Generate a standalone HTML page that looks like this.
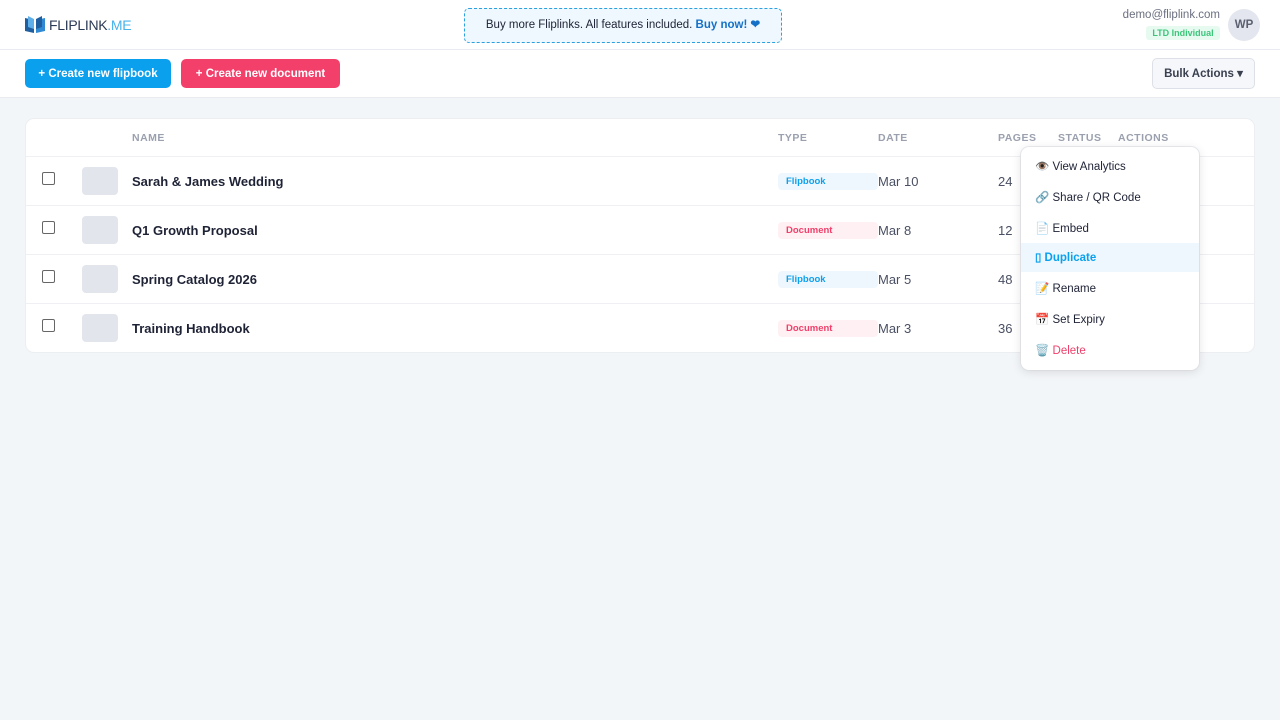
<!DOCTYPE html>
<html><head><meta charset="utf-8"><style>
*{box-sizing:border-box;margin:0;padding:0}
body{width:1280px;height:720px;background:#f3f6f9;font-family:"Liberation Sans",sans-serif;color:#1e2235;position:relative;overflow:hidden}
.top{position:absolute;left:0;top:0;width:1280px;height:50px;background:#fff;border-bottom:1px solid #e8ebef}
.bar{position:absolute;left:0;top:50px;width:1280px;height:48px;background:#fff;border-bottom:1px solid #e8ebef}
.btn{position:absolute;top:9px;height:29px;border-radius:5px;color:#fff;font-weight:bold;font-size:11.5px;line-height:30px;text-align:center}
.card{position:absolute;left:26px;top:119px;width:1228px;height:233px;background:#fff;border-radius:8px;box-shadow:0 0 0 1px #eceef2}
.th{position:absolute;top:13px;font-size:10.5px;font-weight:bold;color:#9aa0ae;letter-spacing:.5px}
.row{position:absolute;left:0;width:1228px;height:49px;border-top:1px solid #eef0f3}
.cb{position:absolute;left:16px;top:15px;width:13px;height:13px;border:1px solid #666;border-radius:2px;background:#fff}
.th2{position:absolute;left:56px;top:10px;width:36px;height:28px;background:#e2e5ec;border-radius:4px}
.nm{position:absolute;left:106px;top:17px;font-size:13px;font-weight:bold;color:#1e2235}
.tag{position:absolute;left:752px;top:16px;width:100px;height:17px;border-radius:4px;font-size:9.5px;font-weight:bold;line-height:17px;padding-left:8px}
.fb{background:#eef7fd;color:#0ea0ec}.dc{background:#fff0f3;color:#ef3f6a}
.dt{position:absolute;left:852px;top:17px;font-size:13px;color:#4a5063}
.pg{position:absolute;left:972px;top:17px;font-size:13px;color:#4a5063}
.menu{position:absolute;left:1021px;top:147px;width:178px;height:223px;background:#fff;border-radius:8px;box-shadow:0 2px 10px rgba(0,0,0,.12),0 0 0 1px #eceef2}
.mi{position:absolute;left:0;width:178px;height:29px;font-size:11.5px;line-height:29px;padding-left:14px;color:#1e2235}
</style></head><body>
<div class="top">
 <svg style="position:absolute;left:24px;top:15px" width="22" height="19" viewBox="0 0 22 19"><path d="M1 3 L10 5 L10 18 L1 16Z" fill="#1f5fa0"/><path d="M12 5 L21 3 L21 16 L12 18Z" fill="#2f8ad3"/><path d="M4 1 L10 4 L10 14 L4 12Z" fill="#5fb0ea"/><path d="M12 4 L18 1 L18 12 L12 14Z" fill="#1f5fa0"/></svg>
 <div style="position:absolute;left:49px;top:17px;font-size:14px;color:#2b3a55;letter-spacing:-.3px">FLIPLINK<span style="color:#4ab2ea">.ME</span></div>
 <div style="position:absolute;left:464px;top:8px;width:318px;height:35px;border:1px dashed #2aa0e0;border-radius:5px;background:#eef8fe;font-size:11.5px;line-height:33px;text-align:center;color:#1e2235">Buy more Fliplinks. All features included. <b style="color:#1571c7;font-weight:bold">Buy now! ❤</b></div>
 <div style="position:absolute;right:60px;top:9px;font-size:11.5px;color:#6b7080">demo@fliplink.com</div>
 <div style="position:absolute;left:1146px;top:26px;width:74px;height:14px;background:#e6faf0;border-radius:3px;color:#3cc67a;font-size:9px;font-weight:bold;line-height:14px;text-align:center">LTD Individual</div>
 <div style="position:absolute;left:1228px;top:9px;width:32px;height:32px;border-radius:50%;background:#e3e6ee;color:#5b6070;font-size:11.5px;font-weight:bold;line-height:32px;text-align:center">WP</div>
</div>
<div class="bar">
 <div class="btn" style="left:25px;width:146px;background:#0aa0ee">+ Create new flipbook</div>
 <div class="btn" style="left:181px;width:159px;background:#f2406b">+ Create new document</div>
 <div style="position:absolute;left:1152px;top:8px;width:103px;height:31px;border:1px solid #dde1e7;border-radius:5px;background:#f5f7fa;font-size:11.5px;font-weight:bold;color:#3a4050;line-height:30px;text-align:center">Bulk Actions ▾</div>
</div>
<div class="card">
 <div class="th" style="left:106px">NAME</div><div class="th" style="left:752px">TYPE</div><div class="th" style="left:852px">DATE</div><div class="th" style="left:972px">PAGES</div><div class="th" style="left:1032px">STATUS</div><div class="th" style="left:1092px">ACTIONS</div>
 <div class="row" style="top:37px"><div class="cb"></div><div class="th2"></div><div class="nm">Sarah &amp; James Wedding</div><div class="tag fb">Flipbook</div><div class="dt">Mar 10</div><div class="pg">24</div></div>
 <div class="row" style="top:86px"><div class="cb"></div><div class="th2"></div><div class="nm">Q1 Growth Proposal</div><div class="tag dc">Document</div><div class="dt">Mar 8</div><div class="pg">12</div></div>
 <div class="row" style="top:135px"><div class="cb"></div><div class="th2"></div><div class="nm">Spring Catalog 2026</div><div class="tag fb">Flipbook</div><div class="dt">Mar 5</div><div class="pg">48</div></div>
 <div class="row" style="top:184px"><div class="cb"></div><div class="th2"></div><div class="nm">Training Handbook</div><div class="tag dc">Document</div><div class="dt">Mar 3</div><div class="pg">36</div></div>
</div>
<div class="menu">
 <div class="mi" style="top:6px">👁️ View Analytics</div>
 <div class="mi" style="top:37px">🔗 Share / QR Code</div>
 <div class="mi" style="top:68px">📄 Embed</div>
 <div class="mi" style="top:96px;background:#eef7fd;color:#0aa0ee;font-weight:bold;line-height:30px">▯ Duplicate</div>
 <div class="mi" style="top:128px">📝 Rename</div>
 <div class="mi" style="top:159px">📅 Set Expiry</div>
 <div class="mi" style="top:190px;color:#ef3f6a">🗑️ Delete</div>
</div>
</body></html>
